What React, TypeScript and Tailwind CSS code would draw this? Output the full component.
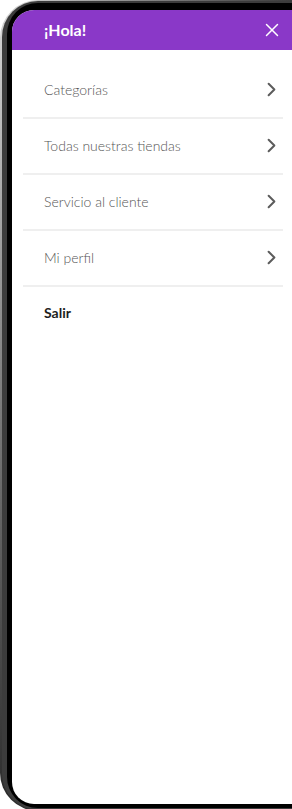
import React from "react";
import { ChevronRight, X } from "lucide-react";

const items = ["Categorías", "Todas nuestras tiendas", "Servicio al cliente", "Mi perfil"];

export default function App() {
  return (
    <div className="w-[292px] h-[809px] overflow-hidden bg-white" style={{ fontFamily: "Lato, 'Noto Sans', sans-serif" }}>
      {/* phone bezel */}
      <div className="w-[330px] h-[811px] rounded-l-[38px] bg-gradient-to-br from-[#d9d9d9] via-[#2b2b2b] to-[#2b2b2b] pl-[2px] pt-[1px] pb-[1px]">
        <div className="h-full rounded-l-[36px] bg-[#3c3c3c] pl-[5px] pt-[2px] pb-[2px]">
          <div className="h-full rounded-l-[31px] bg-black pl-[5px] pt-[7px] pb-[4px]">
            <div className="w-[282px] h-full rounded-l-[22px] overflow-hidden bg-white">
              {/* header */}
              <div className="h-[40px] bg-[#8a38c8] flex items-center justify-between pl-[32px] pr-[11px]">
                <span className="text-[16px] font-bold text-white">¡Hola!</span>
                <X size={22} strokeWidth={1.6} className="text-white" />
              </div>

              {/* menu */}
              <div className="px-[11px] pt-[13px]">
                {items.map((label) => (
                  <div key={label} className="h-[56px] border-b-2 border-[#efefef] flex items-center justify-between pl-[21px] pb-[2px]">
                    <span className="text-[14px] font-light text-[#555555]">{label}</span>
                    <ChevronRight size={23} strokeWidth={2.1} className="text-[#5c5c5c]" />
                  </div>
                ))}
                <div className="h-[50px] flex items-center pl-[21px]">
                  <span className="text-[14px] font-bold text-[#1e1e1e]">Salir</span>
                </div>
              </div>
            </div>
          </div>
        </div>
      </div>
    </div>
  );
}
